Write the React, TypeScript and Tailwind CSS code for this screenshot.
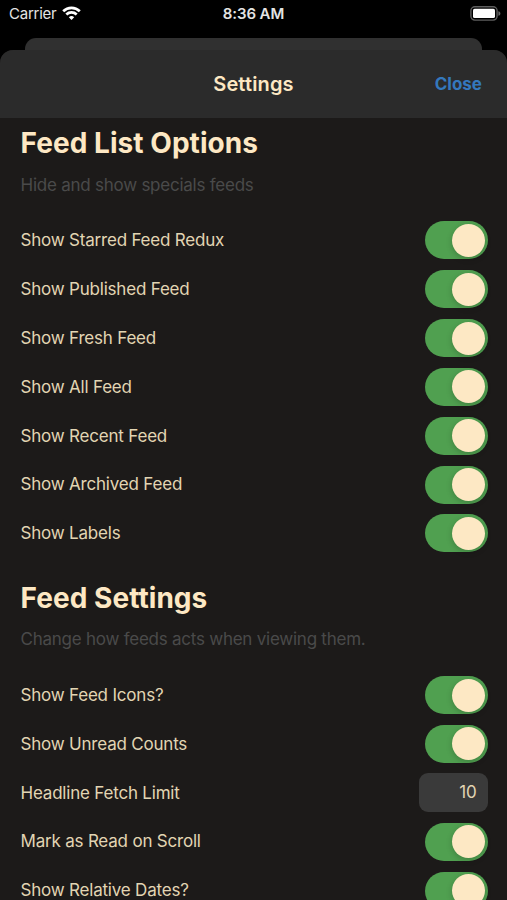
import { useState } from 'react'

type Row = { label: string; value?: string }

const FEED_LIST_ROWS: Row[] = [
  { label: 'Show Starred Feed Redux' },
  { label: 'Show Published Feed' },
  { label: 'Show Fresh Feed' },
  { label: 'Show All Feed' },
  { label: 'Show Recent Feed' },
  { label: 'Show Archived Feed' },
  { label: 'Show Labels' },
]

const FEED_ROWS: Row[] = [
  { label: 'Show Feed Icons?' },
  { label: 'Show Unread Counts' },
  { label: 'Headline Fetch Limit', value: '10' },
  { label: 'Mark as Read on Scroll' },
  { label: 'Show Relative Dates?' },
]

function StatusBar() {
  return (
    <div className="grid grid-cols-3 items-center h-[38px] pb-[11px] text-[15px] leading-[27px] text-[#e4e4e4] flex-shrink-0">
      <div className="flex items-center gap-[6px] pl-[9px]">
        <span className="tracking-[-0.25px]">Carrier</span>
        <svg width="19" height="14" viewBox="0 0 19 14" className="-mt-[1px]" fill="none" stroke="#fff" strokeWidth="2.7">
          <path d="M1.2 5.3a11.8 11.8 0 0 1 16.6 0" />
          <path d="M4.3 8.5a7.5 7.5 0 0 1 10.4 0" />
          <path d="M9.5 14l-2.7-2.8a4 4 0 0 1 5.400 0z" fill="#fff" stroke="none" />
        </svg>
      </div>
      <span className="text-center font-semibold tracking-[-0.1px]">8:36 AM</span>
      <div className="flex justify-end pr-[6px]">
        <svg width="31" height="15" viewBox="0 0 31 15" className="-mt-[1px]">
          <rect x="0.9" y="0.7" width="26.2" height="13.4" rx="4" fill="#000" stroke="#5e5e5e" strokeWidth="1.4" />
          <rect x="3" y="2.7" width="22" height="9.4" rx="1.6" fill="#fff" />
          <path d="M28.4 5.2c1.3.4 2 1.2 2 2.3s-.7 1.9-2 2.3z" fill="#6a6a6a" />
        </svg>
      </div>
    </div>
  )
}

function Toggle({ label }: { label: string }) {
  const [on, setOn] = useState(true)

  return (
    <button
      type="button"
      role="switch"
      aria-checked={on}
      aria-label={label}
      onClick={() => setOn((v) => !v)}
      className={`flex items-center w-[62.5px] h-[38px] px-[2.5px] rounded-full transition-colors ${
        on ? 'justify-end bg-[#50a050]' : 'justify-start bg-[#39393b]'
      }`}
    >
      <span className="w-[33px] h-[33px] rounded-full bg-[#fde8c4] shadow-[0_2px_6px_rgba(0,0,0,0.2)]" />
    </button>
  )
}

function Section({ title, hint, rows }: { title: string; hint: string; rows: Row[] }) {
  return (
    <section>
      <h2 className="text-[28px] leading-[34px] tracking-[0.05px] font-bold text-[#fde8c4]">{title}</h2>
      <p className="mt-[14.5px] text-[17px] leading-[20px] tracking-[-0.24px] text-[#4a4a4a]">{hint}</p>
      <div className="mt-[21.5px]">
        {rows.map(({ label, value }) => (
          <div key={label} className="flex items-center justify-between h-[48.85px] text-[17px] tracking-[-0.2px] text-[#e2d5b3]">
            <span className="pt-[1px]">{label}</span>
            {value ? (
              <span className="flex items-center justify-end w-[69px] h-[39px] pr-[11px] rounded-[9px] bg-[#3a3a3a]">{value}</span>
            ) : (
              <Toggle label={label} />
            )}
          </div>
        ))}
      </div>
    </section>
  )
}

export default function App() {
  return (
    <div className="flex flex-col w-[507px] h-[900px] overflow-hidden bg-black font-['Inter','Liberation_Sans',sans-serif]">
      <StatusBar />
      <div className="mx-[25px] h-3 rounded-t-[11px] bg-[#303030] flex-shrink-0" />
      <div className="flex flex-col flex-1 min-h-0 overflow-hidden rounded-t-[13px] bg-[#1c1a19]">
        <header className="grid grid-cols-3 items-center h-[68px] px-[25px] bg-[#2b2b2b] flex-shrink-0">
          <h1 className="col-start-2 text-center text-[20px] tracking-[0.15px] font-semibold text-[#fde8c4]">Settings</h1>
          <button type="button" className="justify-self-end pt-[2px] text-[17px] font-bold text-[#3478bd]">Close</button>
        </header>
        <main className="flex-1 min-h-0 overflow-hidden pl-[20.5px] pr-[19.5px] pt-[8px] space-y-[22.8px]">
          <Section title="Feed List Options" hint="Hide and show specials feeds" rows={FEED_LIST_ROWS} />
          <Section title="Feed Settings" hint="Change how feeds acts when viewing them." rows={FEED_ROWS} />
        </main>
      </div>
    </div>
  )
}
